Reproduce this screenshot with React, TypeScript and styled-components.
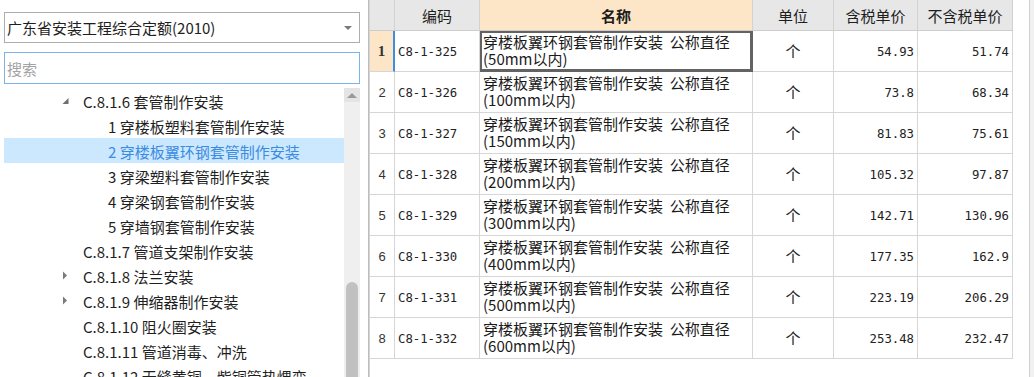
import React from "react";
import styled, { createGlobalStyle, css } from "styled-components";

const GlobalStyle = createGlobalStyle`
  html, body { margin: 0; padding: 0; background: #ffffff; overflow: hidden; }
  body { font-family: "Noto Sans CJK SC", "Noto Sans", sans-serif; color: #222; }
  #root { width: 1034px; height: 377px; }
`;

const Screen = styled.div`
  display: flex;
  width: 1034px;
  height: 377px;
  overflow: hidden;
  background: #ffffff;
`;

/* ---------- left panel ---------- */
const LeftPanel = styled.div`
  width: 368px;
  flex: none;
  display: flex;
  flex-direction: column;
  padding: 12px 8px 0 4px;
  box-sizing: border-box;
`;

const Combo = styled.div`
  height: 31px;
  box-sizing: border-box;
  border: 1px solid #adadad;
  display: flex;
  align-items: center;
  justify-content: space-between;
  padding: 0 7px 0 2px;
  font-size: 15px;
  color: #1e1e1e;
`;

const ComboArrow = styled.span`
  width: 0;
  height: 0;
  border-left: 4px solid transparent;
  border-right: 4px solid transparent;
  border-top: 4px solid #7a7a7a;
  margin-top: 1px;
`;

const Search = styled.div`
  margin-top: 9px;
  height: 32px;
  box-sizing: border-box;
  border: 1px solid #7cb3ee;
  display: flex;
  align-items: center;
  padding-left: 2px;
  font-size: 15px;
  color: #a3a3a3;
`;

const TreeArea = styled.div`
  margin-top: 4px;
  flex: 1;
  display: flex;
  min-height: 0;
`;

const TreeList = styled.div`
  flex: 1;
  display: flex;
  flex-direction: column;
  overflow: hidden;
`;

const TreeRow = styled.div<{ $level: number; $selected?: boolean }>`
  height: 25px;
  flex: none;
  display: flex;
  align-items: center;
  padding-top: 2px;
  box-sizing: border-box;
  padding-left: ${(p) => 58 + p.$level * 25}px;
  font-size: 15px;
  white-space: nowrap;
  color: ${(p) => (p.$selected ? "#3b8be0" : "#1f1f1f")};
  background: ${(p) => (p.$selected ? "#cce8ff" : "transparent")};
`;

const Expander = styled.span`
  width: 21px;
  flex: none;
  display: flex;
  align-items: center;
  margin-top: -2px;
`;

const ScrollBar = styled.div`
  width: 16px;
  flex: none;
  background: #efefef;
  display: flex;
  flex-direction: column;
  align-items: center;
`;

const ScrollUp = styled.div`
  width: 16px;
  height: 14px;
  background: #e4e4e4;
  display: flex;
  align-items: center;
  justify-content: center;
`;

const UpTriangle = styled.span`
  width: 0;
  height: 0;
  border-left: 5px solid transparent;
  border-right: 5px solid transparent;
  border-bottom: 5px solid #9a9a9a;
`;

const ScrollThumb = styled.div`
  margin-top: 180px;
  width: 12px;
  flex: 1;
  border-radius: 6px 6px 0 0;
  background: #c1c1c1;
`;

/* ---------- grid ---------- */
const GridArea = styled.div`
  width: 662px;
  flex: none;
  box-sizing: border-box;
  border-left: 1px solid #bdbdbd;
  border-right: 1px solid #d0d0d0;
  background: #ffffff;
`;

const Table = styled.div`
  width: fit-content;
  border-left: 1px solid #d4d4d4;
  height: 100%;
`;

const Row = styled.div<{ $header?: boolean }>`
  display: grid;
  grid-template-columns: 25px 85px 273px 81px 84px 95px;
  height: ${(p) => (p.$header ? 31 : 41)}px;
`;

const cellBase = css`
  box-sizing: border-box;
  border-right: 1px solid #d6d6d6;
  border-bottom: 1px solid #d6d6d6;
  display: flex;
  align-items: center;
  overflow: hidden;
  white-space: nowrap;
`;

const HeadCell = styled.div<{ $active?: boolean }>`
  ${cellBase};
  justify-content: center;
  padding-top: 1px;
  background: ${(p) => (p.$active ? "#fde6c7" : "#e7e7e7")};
  border-right-color: #d2d2d2;
  border-bottom-color: #cdcdcd;
  font-size: 15px;
  font-weight: ${(p) => (p.$active ? 700 : 400)};
  color: #1e1e1e;
`;

const NumCell = styled.div<{ $active?: boolean }>`
  ${cellBase};
  justify-content: center;
  background: ${(p) => (p.$active ? "#fde6c7" : "#ffffff")};
  border-right: ${(p) => (p.$active ? "2px solid #3c8de6" : "1px solid #d6d6d6")};
  font-family: ${(p) => (p.$active ? '"Liberation Serif", serif' : '"Liberation Sans", sans-serif')};
  font-size: ${(p) => (p.$active ? 15 : 13)}px;
  font-weight: ${(p) => (p.$active ? 700 : 400)};
  color: #333;
`;

const CodeCell = styled.div`
  ${cellBase};
  padding-left: 3px;
  padding-top: 1px;
  font-family: "DejaVu Sans Mono", "Liberation Mono", monospace;
  font-size: 12.3px;
  color: #222;
`;

const NameCell = styled.div<{ $current?: boolean }>`
  ${cellBase};
  flex-direction: column;
  align-items: flex-start;
  justify-content: flex-start;
  padding: 2px 0 0 3px;
  font-size: 15px;
  line-height: 17px;
  white-space: pre;
  color: #1a1a1a;
  ${(p) =>
    p.$current &&
    css`
      box-shadow: inset 0 0 0 2px #636363;
      border-right-color: #636363;
      border-bottom-color: #636363;
    `}
`;

const NameLine = styled.span`
  display: block;
  height: 17px;
`;

const UnitCell = styled.div`
  ${cellBase};
  justify-content: center;
  padding-bottom: 1px;
  font-size: 15px;
  color: #222;
`;

const PriceCell = styled.div`
  ${cellBase};
  justify-content: flex-end;
  padding-right: 3px;
  padding-top: 1px;
  font-family: "DejaVu Sans Mono", "Liberation Mono", monospace;
  font-size: 12.3px;
  color: #222;
`;

const RightStrip = styled.div`
  flex: 1;
  background: #f1f1f1;
`;

type TreeItem = { level: number; label: string; exp?: "open" | "closed"; selected?: boolean };

const treeItems: TreeItem[] = [
  { level: 0, label: "C.8.1.6 套管制作安装", exp: "open" },
  { level: 1, label: "1 穿楼板塑料套管制作安装" },
  { level: 1, label: "2 穿楼板翼环钢套管制作安装", selected: true },
  { level: 1, label: "3 穿梁塑料套管制作安装" },
  { level: 1, label: "4 穿梁钢套管制作安装" },
  { level: 1, label: "5 穿墙钢套管制作安装" },
  { level: 0, label: "C.8.1.7 管道支架制作安装" },
  { level: 0, label: "C.8.1.8 法兰安装", exp: "closed" },
  { level: 0, label: "C.8.1.9 伸缩器制作安装", exp: "closed" },
  { level: 0, label: "C.8.1.10 阻火圈安装" },
  { level: 0, label: "C.8.1.11 管道消毒、冲洗" },
  { level: 0, label: "C.8.1.12 无缝黄铜、紫铜管热煨弯" },
];

const rows = [
  ["C8-1-325", "50", "54.93", "51.74"],
  ["C8-1-326", "100", "73.8", "68.34"],
  ["C8-1-327", "150", "81.83", "75.61"],
  ["C8-1-328", "200", "105.32", "97.87"],
  ["C8-1-329", "300", "142.71", "130.96"],
  ["C8-1-330", "400", "177.35", "162.9"],
  ["C8-1-331", "500", "223.19", "206.29"],
  ["C8-1-332", "600", "253.48", "232.47"],
];

const OpenIcon = () => (
  <svg width="8" height="8" viewBox="0 0 8 8">
    <polygon points="6.5,1 6.5,7 0.5,7" fill="#6f6f6f" />
  </svg>
);

const ClosedIcon = () => (
  <svg width="8" height="9" viewBox="0 0 8 9">
    <polygon points="1,0.5 5,4.5 1,8.5" fill="#7a7a7a" />
  </svg>
);

export default function App() {
  return (
    <>
      <GlobalStyle />
      <Screen>
        <LeftPanel>
          <Combo>
            <span>广东省安装工程综合定额(2010)</span>
            <ComboArrow />
          </Combo>
          <Search>搜索</Search>
          <TreeArea>
            <TreeList>
              {treeItems.map((it, i) => (
                <TreeRow key={i} $level={it.level} $selected={it.selected}>
                  <Expander>
                    {it.exp === "open" && <OpenIcon />}
                    {it.exp === "closed" && <ClosedIcon />}
                  </Expander>
                  {it.label}
                </TreeRow>
              ))}
            </TreeList>
            <ScrollBar>
              <ScrollUp>
                <UpTriangle />
              </ScrollUp>
              <ScrollThumb />
            </ScrollBar>
          </TreeArea>
        </LeftPanel>
        <GridArea>
          <Table>
            <Row $header>
              <HeadCell />
              <HeadCell>编码</HeadCell>
              <HeadCell $active>名称</HeadCell>
              <HeadCell>单位</HeadCell>
              <HeadCell>含税单价</HeadCell>
              <HeadCell>不含税单价</HeadCell>
            </Row>
            {rows.map((r, i) => (
              <Row key={r[0]}>
                <NumCell $active={i === 0}>{i + 1}</NumCell>
                <CodeCell>{r[0]}</CodeCell>
                <NameCell $current={i === 0}>
                  <NameLine>{"穿楼板翼环钢套管制作安装  公称直径"}</NameLine>
                  <NameLine>({r[1]}mm以内)</NameLine>
                </NameCell>
                <UnitCell>个</UnitCell>
                <PriceCell>{r[2]}</PriceCell>
                <PriceCell>{r[3]}</PriceCell>
              </Row>
            ))}
          </Table>
        </GridArea>
        <RightStrip />
      </Screen>
    </>
  );
}
